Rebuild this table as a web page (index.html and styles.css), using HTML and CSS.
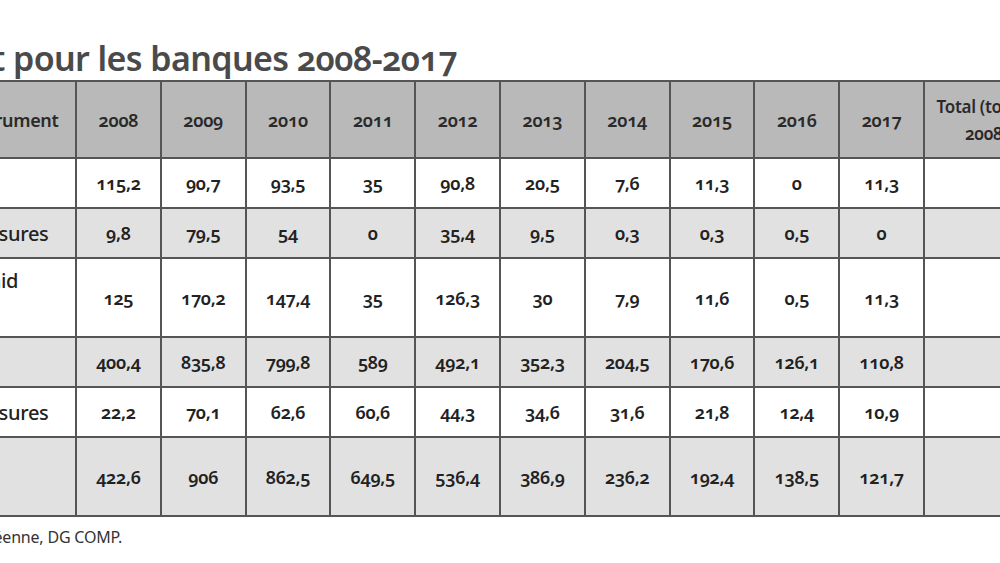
FILE: index.html
```html
<!DOCTYPE html>
<html lang="fr">
<head>
<meta charset="utf-8">
<title>Aides d'État pour les banques 2008-2017</title>
<link rel="stylesheet" href="styles.css">
</head>
<body>
<div class="page">
  <div class="title-row"><h1 class="title">Aides d'État pour les banques 2008-2017</h1></div>
  <table class="grid">
    <colgroup>
      <col class="c-label">
      <col class="c-year"><col class="c-year"><col class="c-year"><col class="c-year"><col class="c-year">
      <col class="c-year"><col class="c-year"><col class="c-year"><col class="c-year"><col class="c-year">
      <col class="c-total">
    </colgroup>
    <thead>
      <tr class="head">
        <th class="label">Type d'instrument</th>
        <th>2008</th><th>2009</th><th>2010</th><th>2011</th><th>2012</th>
        <th>2013</th><th>2014</th><th>2015</th><th>2016</th><th>2017</th>
        <th class="total">Total (tous types)<br>2008-2017</th>
      </tr>
    </thead>
    <tbody>
      <tr class="white">
        <td class="label">Recap.</td>
        <td>115,2</td><td>90,7</td><td>93,5</td><td>35</td><td>90,8</td>
        <td>20,5</td><td>7,6</td><td>11,3</td><td>0</td><td>11,3</td><td></td>
      </tr>
      <tr class="grey">
        <td class="label">Autres mesures</td>
        <td>9,8</td><td>79,5</td><td>54</td><td>0</td><td>35,4</td>
        <td>9,5</td><td>0,3</td><td>0,3</td><td>0,5</td><td>0</td><td></td>
      </tr>
      <tr class="white tall">
        <td class="label top">Total de l'aid</td>
        <td>125</td><td>170,2</td><td>147,4</td><td>35</td><td>126,3</td>
        <td>30</td><td>7,9</td><td>11,6</td><td>0,5</td><td>11,3</td><td></td>
      </tr>
      <tr class="grey">
        <td class="label">Gar.</td>
        <td>400,4</td><td>835,8</td><td>799,8</td><td>589</td><td>492,1</td>
        <td>352,3</td><td>204,5</td><td>170,6</td><td>126,1</td><td>110,8</td><td></td>
      </tr>
      <tr class="white">
        <td class="label">Autres mesures</td>
        <td>22,2</td><td>70,1</td><td>62,6</td><td>60,6</td><td>44,3</td>
        <td>34,6</td><td>31,6</td><td>21,8</td><td>12,4</td><td>10,9</td><td></td>
      </tr>
      <tr class="grey tall">
        <td class="label">Total</td>
        <td>422,6</td><td>906</td><td>862,5</td><td>649,5</td><td>536,4</td>
        <td>386,9</td><td>236,2</td><td>192,4</td><td>138,5</td><td>121,7</td><td></td>
      </tr>
    </tbody>
  </table>
  <div class="source-row"><p class="source">Source : Commission européenne, DG COMP.</p></div>
</div>
</body>
</html>
```
FILE: styles.css
```css
html, body {
  margin: 0;
  padding: 0;
  background: #ffffff;
  overflow: hidden;
}
body {
  width: 1000px;
  height: 563px;
  font-family: "Noto Sans", "Open Sans", "Liberation Sans", sans-serif;
  font-variant-numeric: oldstyle-nums;
  color: #2b2b2b;
}
.page {
  margin-left: -125px;
  width: 1300px;
}
.title-row {
  display: flex;
  justify-content: flex-end;
  width: 582px;
  padding-top: 36px;
}
.title {
  flex: none;
  margin: 0;
  height: 44px;
  font-size: 34px;
  font-weight: 600;
  line-height: 44px;
  color: #4a4a4a;
  white-space: nowrap;
  letter-spacing: -0.6px;
}
.grid {
  border-collapse: collapse;
  table-layout: fixed;
  width: 1210px;
  border-top: 2px solid #6a6a6a;
}
.c-label { width: 200px; }
.c-year { width: 84.8px; }
.c-total { width: 162px; }
.grid th, .grid td {
  border: 2px solid #555555;
  text-align: center;
  vertical-align: middle;
  padding: 0 4px;
  font-size: 18px;
  white-space: nowrap;
  letter-spacing: -0.3px;
}
.grid th {
  font-weight: 600;
  font-size: 18px;
  color: #2a2a2a;
}
.head { background: #b9b9b9; }
.head .total { font-size: 17px; line-height: 27px; }
.grid td { font-weight: 600; color: #222; }
.grid tr { height: 50px; }
.grid tr.tall { height: 79px; }
.grid tr.head { height: 77px; }
.white { background: #ffffff; }
.grey { background: #e1e1e1; }
.grid .label {
  text-align: left;
  padding-left: 26px;
}
.grid td.label {
  font-weight: 500;
  font-size: 20px;
}
.grid .label.top { vertical-align: top; padding-top: 10px; line-height: 24px; }
.source-row {
  display: flex;
  justify-content: flex-end;
  width: 247px;
  margin-top: 9px;
}
.source {
  flex: none;
  margin: 0;
  font-size: 16px;
  color: #333;
  white-space: nowrap;
  letter-spacing: -0.2px;
}
```
